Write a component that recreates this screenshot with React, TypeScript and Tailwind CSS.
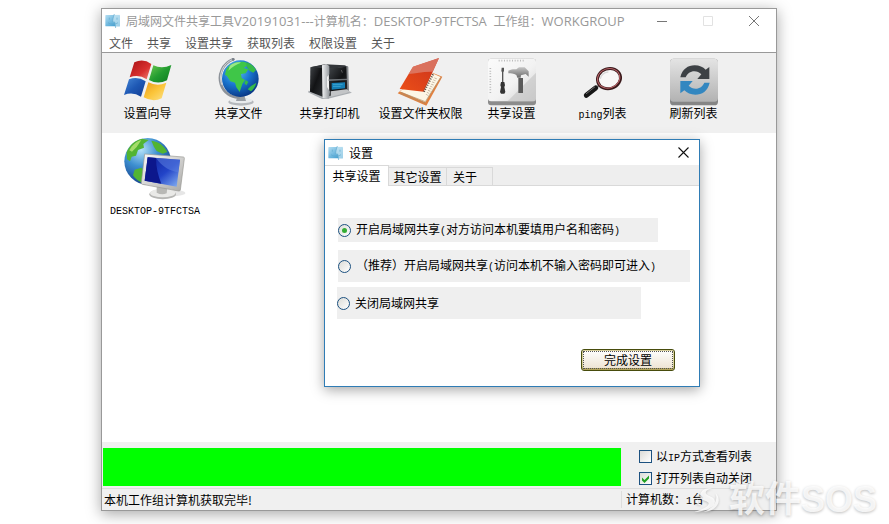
import { useState } from 'react';
import type { ReactNode } from 'react';

const MENUS = ['文件', '共享', '设置共享', '获取列表', '权限设置', '关于'];

const OPTIONS = [
  {
    id: 'open',
    label: <>开启局域网共享<Mono>(</Mono>对方访问本机要填用户名和密码<Mono>)</Mono></>,
    box: 'ml-[13px] h-6 w-80',
  },
  {
    id: 'guest',
    label: <>（推荐）开启局域网共享<Mono>(</Mono>访问本机不输入密码即可进入<Mono>)</Mono></>,
    box: 'ml-[13px] mt-2 h-8 w-[352px]',
  },
  { id: 'close', label: '关闭局域网共享', box: 'ml-3 mt-[5px] h-8 w-[304px]' },
];

function AppIcon() {
  return (
    <svg viewBox="0 0 48 42" className="h-[14px] w-4 shrink-0">
      <defs>
        <linearGradient id="app" x1="0" y1="0" x2="1" y2="1">
          <stop offset="0" stopColor="#b4def2" />
          <stop offset="1" stopColor="#2c93cb" />
        </linearGradient>
      </defs>
      <rect x="1" y="3" width="44" height="34" rx="2" fill="url(#app)" />
      <path d="M27 2h18v34H31l-2-11h-6c0-9 2-16 4-23Z" fill="#d7eef8" opacity=".65" />
      <path d="M13 11v6M36 11v6M9 26c8 6 22 6 30 0M28 0c-3 9-5 16-5 24h6l3 18" fill="none" stroke="#5fa9cf" strokeWidth="2" />
    </svg>
  );
}

function FlagIcon() {
  return (
    <svg viewBox="0 0 144 144" className="size-12">
      <defs>
        <linearGradient id="fr" x1="0" y1="0" x2="1" y2="1"><stop stopColor="#a80f12" /><stop offset=".6" stopColor="#d8302f" /><stop offset="1" stopColor="#ee8878" /></linearGradient>
        <linearGradient id="fg" x1="0" y1="0" x2="1" y2="1"><stop stopColor="#6cc84f" /><stop offset=".5" stopColor="#229c30" /><stop offset="1" stopColor="#0c7a1f" /></linearGradient>
        <linearGradient id="fb" x1="0" y1="0" x2="1" y2="1"><stop stopColor="#4687d6" /><stop offset=".5" stopColor="#1e58b4" /><stop offset="1" stopColor="#123c92" /></linearGradient>
        <linearGradient id="fy" x1="0" y1="0" x2="1" y2="1"><stop stopColor="#e8981c" /><stop offset=".5" stopColor="#fbc53a" /><stop offset="1" stopColor="#fbe28a" /></linearGradient>
      </defs>
      <path d="M31 13Q58 0 82 18L68 64Q44 47 17 58Z" fill="url(#fr)" />
      <path d="M88 22Q114 34 142 21L129 67Q102 81 75 66Z" fill="url(#fg)" />
      <path d="M15 64Q40 53 65 70L51 116Q26 100 0 111Z" fill="url(#fb)" />
      <path d="M73 73Q100 87 127 74L113 121Q87 134 59 118Z" fill="url(#fy)" />
    </svg>
  );
}

function GlobeIcon() {
  return (
    <svg viewBox="0 0 144 144" className="size-12">
      <defs>
        <radialGradient id="gl" cx=".38" cy=".28" r=".8">
          <stop stopColor="#62c4f5" />
          <stop offset=".5" stopColor="#1874cf" />
          <stop offset="1" stopColor="#082c78" />
        </radialGradient>
      </defs>
      <ellipse cx="78" cy="132" rx="38" ry="11" fill="#b5b8bc" />
      <ellipse cx="78" cy="128" rx="34" ry="8" fill="#e9ebed" />
      <path d="M68 112h20l5 17H63Z" fill="#9a9ea4" />
      <path d="M56 3C22 16 8 50 18 80c8 24 30 40 56 38" fill="none" stroke="#8d9299" strokeWidth="8" />
      <path d="M56 3C22 16 10 50 20 80" fill="none" stroke="#d5d8dc" strokeWidth="3" />
      <circle cx="76" cy="62" r="55" fill="url(#gl)" />
      <path d="M34 34c10-18 34-26 56-22l10 8-14 10 14 4-8 12-14 2 2 12 10 6-8 12-8 24-10-14-4-14-14-4-10-16-6-4Z" fill="#3fc648" />
      <path d="M94 12c14 5 24 13 29 24l-8 8-12-6-8-12ZM108 84l16-10c-2 10-8 20-16 26l-10-6ZM92 66l8 6-6 10-6-6Z" fill="#36b948" />
      <path d="M44 24c10-9 24-13 34-10-12 4-26 12-38 24Z" fill="#b8f29a" opacity=".75" />
      <circle cx="55" cy="4" r="4" fill="#777d86" />
    </svg>
  );
}

function PrinterIcon() {
  return (
    <svg viewBox="0 0 144 144" className="size-12">
      <defs>
        <linearGradient id="pm" x1="0" y1="0" x2="1" y2="0"><stop stopColor="#f3f4f5" /><stop offset="1" stopColor="#8d9297" /></linearGradient>
        <linearGradient id="pk" x1="0" y1="0" x2="1" y2="1"><stop stopColor="#42464a" /><stop offset=".5" stopColor="#121315" /><stop offset="1" stopColor="#2c2f32" /></linearGradient>
      </defs>
      <path d="M8 98l38 10 78-10 14 6-72 18-18 1L6 103Z" fill="#a9adb1" />
      <path d="M13 28l37-7v95l-38-15Z" fill="url(#pk)" />
      <path d="M16 27l40-8 60 3 10 4-58 7Z" fill="#33363a" />
      <path d="M68 30l57-4 2 76-57 12Z" fill="url(#pk)" />
      <path d="M48 22l13-4 9 6v25l-7 8v30l9 14-4 21-18-2Z" fill="url(#pm)" />
      <path d="M68 64l57-2v4l-57 3Z" fill="#6d7277" />
      <path d="M77 75l40-2v18l-40 4Z" fill="#157fb5" />
      <path d="M81 79h29M81 85h23" stroke="#4db4dc" strokeWidth="2" />
      <path d="M121 25l6 1 2 77-5 1Z" fill="#85898d" />
      <path d="M74 100l48-6 12 8-60 14Z" fill="#c3c5c7" />
      <path d="M106 36l3 8" stroke="#777" strokeWidth="2" />
    </svg>
  );
}

function BookIcon() {
  return (
    <svg viewBox="0 0 144 144" className="size-12">
      <defs>
        <linearGradient id="bk" x1="1" y1="0" x2="0" y2="1"><stop stopColor="#c9301c" /><stop offset="1" stopColor="#ec5018" /></linearGradient>
      </defs>
      <path d="M108 45l28 11-48 87L2 106l8-8Z" fill="#e08140" />
      <path d="M106 46l25 11-46 76L8 100Z" fill="#fdf6e5" />
      <path d="M12 103l73 28 46-73M10 107l75 29" fill="none" stroke="#a98c68" strokeWidth="2" />
      <path d="M48 26L126 0 80 101 8 93Z" fill="url(#bk)" />
      <path d="M48 26L126 0 107 41C78 40 56 47 35 48Z" fill="#dc8474" opacity=".75" />
      <path d="M108 49L80 103" stroke="#564b45" strokeWidth="6" strokeDasharray="3 4" />
      <path d="M116 60l-27 53" stroke="#b9a995" strokeWidth="8" strokeDasharray="2 5" />
    </svg>
  );
}

function ToolsIcon() {
  return (
    <svg viewBox="0 0 144 144" className="size-12">
      <defs>
        <linearGradient id="tb" x1="0" y1="0" x2="1" y2="1"><stop stopColor="#fbfbfb" /><stop offset=".55" stopColor="#f2f2f2" /><stop offset="1" stopColor="#cfcfcf" /></linearGradient>
        <linearGradient id="th" x1="0" y1="0" x2="0" y2="1"><stop stopColor="#c4c4c4" /><stop offset="1" stopColor="#6c6c6c" /></linearGradient>
      </defs>
      <rect y="2" width="144" height="140" rx="9" fill="#8c8c8c" />
      <rect y="2" width="144" height="128" rx="9" fill="url(#tb)" />
      <path d="M144 44v78q0 8-8 8H58Z" fill="#c3c3c3" opacity=".6" />
      <path d="M32 8h76M7 30v76" stroke="#bbb" strokeWidth="5" strokeDasharray="3 5" />
      <path d="M41 29h7v10l-2 4v30h-4V43l-2-4Z" fill="#555" />
      <path d="M39 72h10l2 10-2 5 3 15-3 5H39l-3-5 3-15-2-5Z" fill="#333" />
      <path d="M61 38c10-5 17-4 24-4l8-6h17l12 12v16l-9-8-14 4-1 7H88l-3-8c-8-5-17-4-24-5Z" fill="url(#th)" />
      <path d="M91 60h14v45H91Z" fill="#5a5a5a" />
    </svg>
  );
}

function LensIcon() {
  return (
    <svg viewBox="0 0 144 144" className="size-12">
      <path d="M60 83L45 94" stroke="#8c8c8c" strokeWidth="7" />
      <path d="M50 90L22 112" stroke="#161616" strokeWidth="15" strokeLinecap="round" />
      <path d="M47 87L22 107" stroke="#6b6b6b" strokeWidth="3" strokeLinecap="round" />
      <ellipse cx="90" cy="62" rx="35" ry="30" fill="#f8f7f7" stroke="#3a191b" strokeWidth="9" transform="rotate(-18 90 62)" />
      <ellipse cx="89" cy="61" rx="34" ry="29" fill="none" stroke="#b86468" strokeWidth="3" transform="rotate(-18 89 61)" />
      <path d="M64 63c2-12 12-20 24-21" fill="none" stroke="#d8d8d8" strokeWidth="4" />
    </svg>
  );
}

function RefreshIcon() {
  return (
    <svg viewBox="0 0 144 144" className="size-12">
      <defs>
        <linearGradient id="rb" x1="0" y1="0" x2="0" y2="1"><stop stopColor="#e4e4e4" /><stop offset="1" stopColor="#b2b2b2" /></linearGradient>
      </defs>
      <rect y="2" width="144" height="140" rx="11" fill="#858585" />
      <rect y="2" width="144" height="129" rx="11" fill="url(#rb)" />
      <path d="M31 58C37 33 54 22 74 22c14 0 25 5 33 13l11-8v36H82l12-14c-6-6-13-9-21-9-12 0-21 7-26 18Z" fill="#3d4145" />
      <path d="M119 74c-6 25-23 36-43 36-14 0-25-5-33-13l-12 9V69h37L56 83c6 6 13 9 21 9 12 0 21-7 26-18Z" fill="#3387c0" />
    </svg>
  );
}

function ComputerIcon() {
  return (
    <svg viewBox="0 0 198 198" className="size-[66px]">
      <defs>
        <radialGradient id="cg" cx=".36" cy=".25" r=".8"><stop stopColor="#b5e1f8" /><stop offset=".45" stopColor="#3d8fd0" /><stop offset="1" stopColor="#123a86" /></radialGradient>
        <linearGradient id="cs" x1="0" y1="0" x2="1" y2="1"><stop stopColor="#0d1e96" /><stop offset=".55" stopColor="#2244c8" /><stop offset="1" stopColor="#88b4f4" /></linearGradient>
        <linearGradient id="cf" x1="0" y1="0" x2="1" y2="1"><stop stopColor="#fafafa" /><stop offset="1" stopColor="#aaa9a6" /></linearGradient>
      </defs>
      <circle cx="77" cy="79" r="70" fill="url(#cg)" />
      <path d="M14 52C22 30 40 15 60 11l20 4-16 12 2 11-18 7-6 17-13 3-5 14-9-6ZM88 17c22 2 38 15 48 34l-14 5-18-8-8-12ZM38 104l20-6 14 14-4 34c-16-4-28-14-35-25Z" fill="#52b432" />
      <path d="M22 46c10-18 22-27 36-31L44 36 30 50Z" fill="#b9e678" opacity=".8" />
      <ellipse cx="150" cy="174" rx="40" ry="10" fill="#dcdcdc" opacity=".7" />
      <ellipse cx="122" cy="178" rx="40" ry="15" fill="#b6b6b4" />
      <ellipse cx="122" cy="174" rx="38" ry="13" fill="#e9e9e7" />
      <path d="M104 152l32 6-2 17q-15 6-30-2Z" fill="#b8b8b5" />
      <path d="M68 57l116 9q4 1 3 5l-12 94q-1 4-5 3L61 148q-4-1-3-5Z" fill="url(#cf)" stroke="#989894" strokeWidth="2" />
      <path d="M77 67l97 7-10 81-96-18Z" fill="url(#cs)" />
      <path d="M77 67l25 2c0 28 6 52 16 77l-50-9Z" fill="#0c178c" />
      <path d="M102 69l72 5-5 38c-24-4-47-15-67-43Z" fill="#5b7fe0" opacity=".55" />
    </svg>
  );
}

const TOOLS: { label: ReactNode; icon: ReactNode }[] = [
  { label: '设置向导', icon: <FlagIcon /> },
  { label: '共享文件', icon: <GlobeIcon /> },
  { label: '共享打印机', icon: <PrinterIcon /> },
  { label: '设置文件夹权限', icon: <BookIcon /> },
  { label: '共享设置', icon: <ToolsIcon /> },
  { label: <><Mono>ping</Mono>列表</>, icon: <LensIcon /> },
  { label: '刷新列表', icon: <RefreshIcon /> },
];

function Mono({ children }: { children: ReactNode }) {
  return <span className="font-['Liberation_Mono',monospace] text-[10px]">{children}</span>;
}

function Latin({ children }: { children: ReactNode }) {
  return <span className="font-['Open_Sans',sans-serif] text-[13px]">{children}</span>;
}

function CheckRow({ children, defaultChecked }: { children: ReactNode; defaultChecked?: boolean }) {
  return (
    <label className="flex items-center gap-1">
      <span className="relative flex">
        <input
          type="checkbox"
          defaultChecked={defaultChecked}
          className="peer size-[13px] appearance-none border border-[#1c5180] bg-gradient-to-br from-[#dcdcd7] to-white"
        />
        <svg viewBox="0 0 13 13" className="pointer-events-none absolute inset-0 hidden peer-checked:block">
          <path d="M3 5.5v3L5.5 11 10 6.500V3.500L5.500 8Z" fill="#21a121" />
        </svg>
      </span>
      {children}
    </label>
  );
}

function SettingsDialog() {
  const [selected, setSelected] = useState('open');

  return (
    <div
      role="dialog"
      aria-label="设置"
      className="absolute left-[222px] top-[130px] flex w-[376px] flex-col border border-[#2f7cb5] bg-white pb-[15px] shadow-[0_3px_12px_rgba(0,0,0,0.35)]"
    >
      <div className="flex h-[25px] items-center gap-[5px] pl-[3px] pr-2">
        <AppIcon />
        <span className="flex-1">设置</span>
        <button type="button" aria-label="关闭" className="p-0.5">
          <svg viewBox="0 0 11 11" className="size-[11px]">
            <path d="M.5.5l10 10M10.500.5l-10 10" stroke="#111" strokeWidth="1.100" />
          </svg>
        </button>
      </div>
      <div role="tablist" className="flex h-[21px] border-b border-[#d9d9d9] bg-[#eeeeee] leading-[18px]">
        <button type="button" role="tab" aria-selected="true" className="-mb-px w-16 border-r border-t border-[#d9d9d9] bg-white">
          共享设置
        </button>
        <button type="button" role="tab" aria-selected="false" className="mt-0.5 w-[58px] border-r border-t border-[#d9d9d9]">
          其它设置
        </button>
        <button type="button" role="tab" aria-selected="false" className="mt-0.5 w-[46px] border-r border-t border-[#d9d9d9] pl-1.5 text-left">
          关于
        </button>
      </div>
      <div className="pt-8">
        {OPTIONS.map(({ id, label, box }) => (
          <label key={id} className={`flex items-center gap-[5px] bg-[#efefef] ${box}`}>
            <input
              type="radio"
              name="share"
              checked={selected === id}
              onChange={() => setSelected(id)}
              className="grid size-[13px] shrink-0 appearance-none place-items-center rounded-full border border-[#1c5180] bg-gradient-to-br from-[#dcdcd7] to-white checked:before:size-[5px] checked:before:rounded-full checked:before:bg-[#35ad35]"
            />
            <span className="whitespace-nowrap">{label}</span>
          </label>
        ))}
      </div>
      <button
        type="button"
        className="mr-6 mt-[30px] h-[22px] w-[94px] self-end rounded-[3px] border border-[#474c0c] bg-gradient-to-b from-white to-[#ece1cf] p-px shadow-[inset_0_-2px_0_#b3a45c,inset_0_0_0_1px_#d8cf9c]"
      >
        <span className="flex h-full items-center justify-center border border-dotted border-[#555]">完成设置</span>
      </button>
    </div>
  );
}

function Watermark() {
  return (
    <div
      className="pointer-events-none absolute bottom-1 right-3 flex items-center gap-2 font-['Liberation_Sans','Noto_Sans_CJK_SC',sans-serif] text-[36px] font-bold leading-10 text-white/80 [text-shadow:0_1px_3px_rgba(0,0,0,0.25)]"
    >
      <svg viewBox="0 0 84 84" className="size-7 overflow-visible drop-shadow-[0_1px_1px_rgba(0,0,0,0.25)]">
        <path d="M22 34C18 15 38 2 58 8 44 8 36 16 39 23c4 7 27 8 27 24C66 64 38 76 4 78c24-8 42-16 43-25 0-9-21-7-25-19Z" fill="currentColor" />
        <path d="M68 22c24 24-2 56-36 55 27-9 44-31 36-55ZM14 38C4 50 10 58 28 58 15 53 12 47 14 38Z" fill="currentColor" />
      </svg>
      <span>软件SOS</span>
    </div>
  );
}

export default function App() {
  return (
    <div className="relative flex min-h-screen bg-white pb-[13px] pl-[101px] pr-28 pt-2 font-['Noto_Sans_CJK_SC',sans-serif] text-xs text-black">
      <div className="relative flex flex-1 flex-col border border-[#999] bg-white shadow-[0_3px_14px_rgba(0,0,0,0.35)]">
        <header className="flex h-6 items-center gap-[5px] pl-[3px] pr-4 text-[#999]">
          <AppIcon />
          <h1 className="flex-1 whitespace-pre leading-[18px]">
            局域网文件共享工具<Latin>V20191031---</Latin>计算机名：<Latin>{'DESKTOP-9TFCTSA  '}</Latin>工作组：<Latin>WORKGROUP</Latin>
          </h1>
          <div className="flex items-center gap-[30px]">
            <button type="button" aria-label="最小化" className="w-3">
              <svg viewBox="0 0 12 12" className="size-3"><path d="M1 6.500h10" stroke="#777" /></svg>
            </button>
            <button type="button" aria-label="最大化" disabled className="ml-1 w-3">
              <svg viewBox="0 0 12 12" className="size-3"><path d="M1.500 1.500h9v9h-9Z" fill="none" stroke="#e2e2e2" /></svg>
            </button>
            <button type="button" aria-label="关闭" className="ml-1 w-3">
              <svg viewBox="0 0 12 12" className="size-3"><path d="M1 1l10 10M11 1L1 11" stroke="#777" /></svg>
            </button>
          </div>
        </header>
        <nav className="flex h-5 items-center gap-3.5 border-b border-[#999] pl-[7px] text-[#555]">
          {MENUS.map((menu) => (
            <button key={menu} type="button" className="leading-[18px]">{menu}</button>
          ))}
        </nav>
        <div className="flex h-20 bg-[#f0f0f0] pt-[5px]">
          {TOOLS.map(({ label, icon }, i) => (
            <button key={i} type="button" className="flex w-[91px] flex-col items-center whitespace-nowrap leading-[14px]">
              {icon}
              <span>{label}</span>
            </button>
          ))}
        </div>

        <main className="flex-1 pl-0.5 pt-0.5">
          <button type="button" className="flex w-[102px] flex-col items-center gap-1">
            <ComputerIcon />
            <Mono>DESKTOP-9TFCTSA</Mono>
          </button>
        </main>

        <footer className="bg-[#f0f0f0]">
          <div className="flex">
            <div className="mb-0.5 ml-px mt-1.5 flex-1 bg-[#00ff00]" />
            <div className="flex w-[155px] flex-col gap-[5px] pb-0.5 pl-[18px] pt-1.5">
              <CheckRow><span>以<Mono>IP</Mono>方式查看列表</span></CheckRow>
              <CheckRow defaultChecked>打开列表自动关闭</CheckRow>
            </div>
          </div>
          <div className="flex h-[22px] items-center border-t border-[#ddd]">
            <span className="flex-1 pl-0.5">本机工作组计算机获取完毕!</span>
            <span className="w-[155px] border-l border-[#ddd] pl-1">计算机数：<Mono>1</Mono>台</span>
          </div>
        </footer>

        <SettingsDialog />
      </div>
      <Watermark />
    </div>
  );
}
